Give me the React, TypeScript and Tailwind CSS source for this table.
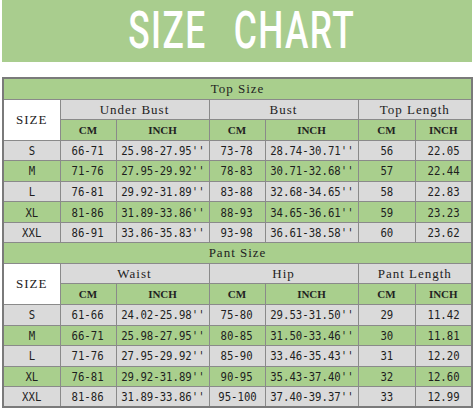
import React from "react";

const G = "bg-[#a9cf8d]";
const Y = "bg-[#dadada]";

const top = [
  ["S", "66-71", "25.98-27.95''", "73-78", "28.74-30.71''", "56", "22.05"],
  ["M", "71-76", "27.95-29.92''", "78-83", "30.71-32.68''", "57", "22.44"],
  ["L", "76-81", "29.92-31.89''", "83-88", "32.68-34.65''", "58", "22.83"],
  ["XL", "81-86", "31.89-33.86''", "88-93", "34.65-36.61''", "59", "23.23"],
  ["XXL", "86-91", "33.86-35.83''", "93-98", "36.61-38.58''", "60", "23.62"],
];
const pant = [
  ["S", "61-66", "24.02-25.98''", "75-80", "29.53-31.50''", "29", "11.42"],
  ["M", "66-71", "25.98-27.95''", "80-85", "31.50-33.46''", "30", "11.81"],
  ["L", "71-76", "27.95-29.92''", "85-90", "33.46-35.43''", "31", "12.20"],
  ["XL", "76-81", "29.92-31.89''", "90-95", "35.43-37.40''", "32", "12.60"],
  ["XXL", "81-86", "31.89-33.86''", "95-100", "37.40-39.37''", "33", "12.99"],
];

const cell = "border border-[#8a8a8a] p-0 text-center align-middle";
const serif = "font-['Liberation_Serif',serif] text-[13px] tracking-[1px] text-[#222]";
const bold = "font-['Liberation_Serif',serif] text-[11px] font-bold text-[#222]";

function Data({ v }: { v: string }) {
  return (
    <div className="flex justify-center whitespace-nowrap">
      <span className="inline-block scale-x-[0.82] font-['DejaVu_Sans_Mono',monospace] text-[13px] leading-none text-[#1e1e1e]">
        {v}
      </span>
    </div>
  );
}

function Section({ title, a, b, c, rows }: { title: string; a: string; b: string; c: string; rows: string[][] }) {
  return (
    <>
      <tr className="h-[20.5px]">
        <td colSpan={7} className={`${cell} ${G} ${serif}`}>{title}</td>
      </tr>
      <tr className="h-[20.5px]">
        <td rowSpan={2} className={`${cell} bg-white ${serif}`}>SIZE</td>
        <td colSpan={2} className={`${cell} ${Y} ${serif}`}>{a}</td>
        <td colSpan={2} className={`${cell} ${Y} ${serif}`}>{b}</td>
        <td colSpan={2} className={`${cell} ${Y} ${serif}`}>{c}</td>
      </tr>
      <tr className="h-[20.5px]">
        {["CM", "INCH", "CM", "INCH", "CM", "INCH"].map((h, i) => (
          <td key={i} className={`${cell} ${G} ${bold}`}>{h}</td>
        ))}
      </tr>
      {rows.map((r, i) => (
        <tr key={i} className={`h-[20.6px] ${i % 2 === 1 ? G : Y}`}>
          {r.map((v, j) => (
            <td key={j} className={cell}>
              <Data v={v} />
            </td>
          ))}
        </tr>
      ))}
    </>
  );
}

export default function App() {
  return (
    <div className="w-[474px] h-[409px] bg-white overflow-hidden">
      <div className="mx-[2px] h-[62px] bg-[#a9cd8e] flex items-center justify-center">
        <div className="flex gap-[40px] scale-x-[0.68] translate-x-[5px] font-['Roboto',sans-serif] font-medium text-[52px] leading-none text-white tracking-[2px] whitespace-nowrap">
          <span>SIZE</span>
          <span>CHART</span>
        </div>
      </div>
      <div className="mt-[15px] mx-[2px]">
        <table className="w-[469px] table-fixed border-collapse border-2 border-[#7a7a7a]">
          <colgroup>
            <col className="w-[57px]" />
            <col className="w-[56px]" />
            <col className="w-[93px]" />
            <col className="w-[56px]" />
            <col className="w-[93px]" />
            <col className="w-[57px]" />
            <col className="w-[57px]" />
          </colgroup>
          <tbody>
            <Section title="Top Size" a="Under Bust" b="Bust" c="Top Length" rows={top} />
            <Section title="Pant Size" a="Waist" b="Hip" c="Pant Length" rows={pant} />
          </tbody>
        </table>
      </div>
    </div>
  );
}
